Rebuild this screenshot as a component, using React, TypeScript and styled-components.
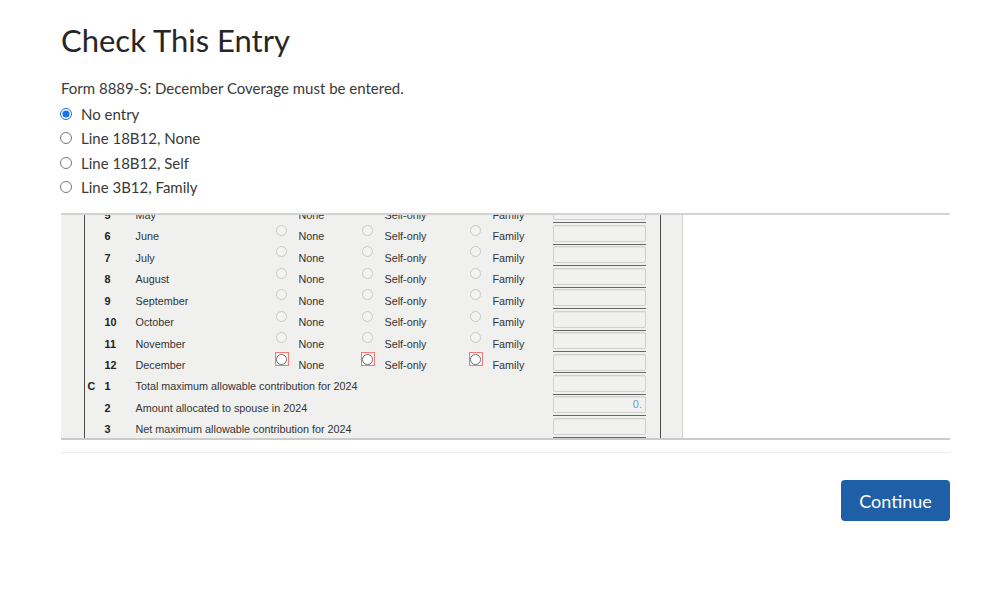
import { useLayoutEffect, useRef } from 'react';
import styled, { createGlobalStyle } from 'styled-components';

const GlobalStyle = createGlobalStyle`
  html, body {
    margin: 0;
    padding: 0;
    background: #ffffff;
  }
  body {
    font-family: Lato, "Noto Sans", sans-serif;
    color: #333333;
  }
`;

const Page = styled.main`
  padding: 20px 49px 0 61px;
`;

const Title = styled.h1`
  margin: 0;
  font-size: 31px;
  line-height: 40px;
  font-weight: 400;
  color: #262626;
`;

const Message = styled.p`
  margin: 16px 0 2px;
  font-size: 15px;
  line-height: 24px;
  color: #393939;
`;

const Choices = styled.div`
  display: flex;
  flex-direction: column;
`;

const Choice = styled.label`
  display: flex;
  align-items: center;
  gap: 9px;
  height: 24.3px;
  font-size: 15px;
  color: #393939;
`;

const ChoiceRadio = styled.input.attrs({ type: 'radio' })`
  width: 12px;
  height: 12px;
  margin: 0 0 0 -1px;
  accent-color: #1a73e8;
`;

const Viewer = styled.section`
  margin-top: 14px;
  border-top: 2px solid #d3d3d3;
  border-bottom: 2px solid #cbcbcb;
`;

const Viewport = styled.div`
  height: 223px;
  overflow: hidden;
  background: #ffffff;
`;

const Sheet = styled.div`
  width: 622px;
  box-sizing: border-box;
  padding-left: 22.5px;
  background: #f0f0ef;
  border-right: 1.5px solid #d2d2d2;
  font-family: "Liberation Sans", Arial, sans-serif;
  font-size: 10.8px;
  color: #333333;
`;

const FormBody = styled.div`
  width: 577px;
  box-sizing: border-box;
  padding: 40px 0 30px;
  border-left: 1.5px solid #4a4a4a;
  border-right: 1.5px solid #4a4a4a;
`;

const Row = styled.div`
  display: grid;
  grid-template-columns: 15px 36px 140px 86px 108px 84px 92px 13px;
  height: 21.45px;
  align-items: start;
`;

const Letter = styled.div`
  padding: 6px 0 0 3px;
  line-height: 14px;
  font-weight: 700;
  color: #222222;
`;

const LineNo = styled.div`
  padding: 6px 0 0 5px;
  line-height: 14px;
  font-weight: 700;
  color: #222222;
`;

const Desc = styled.div<{ $wide?: boolean }>`
  grid-column: ${(p) => (p.$wide ? 'span 4' : 'span 1')};
  padding-top: 6px;
  line-height: 14px;
  white-space: nowrap;
`;

const Option = styled.div`
  display: flex;
  align-items: flex-start;
`;

const OptionLabel = styled.span`
  margin-left: 10px;
  padding-top: 6px;
  line-height: 14px;
`;

const BubbleFrame = styled.span<{ $flag?: boolean }>`
  display: flex;
  align-items: center;
  justify-content: center;
  width: 14px;
  height: 14px;
  margin: 0 0 0 -1px;
  box-sizing: border-box;
  border: 1px solid ${(p) => (p.$flag ? '#f47a7a' : 'transparent')};
`;

const Bubble = styled.span<{ $flag?: boolean }>`
  display: block;
  width: 11px;
  height: 11px;
  box-sizing: border-box;
  border-radius: 50%;
  border: 1px solid ${(p) => (p.$flag ? '#707070' : '#c9c9c9')};
  background: ${(p) => (p.$flag ? '#ffffff' : '#f3f3f2')};
`;

const InputCell = styled.div`
  grid-column: 7;
  height: 21.45px;
  box-sizing: border-box;
  padding-top: 1.5px;
  margin: 0 -0.5px;
  border-bottom: 1.5px solid #666666;
`;

const InputBox = styled.div`
  height: 17px;
  box-sizing: border-box;
  border: 1px solid #d0d0d0;
  border-radius: 2px;
  background: #f1f1f0;
  box-shadow: inset 0 1px 1px rgba(0, 0, 0, 0.05);
  padding-right: 3px;
  text-align: right;
  line-height: 15px;
  font-size: 11px;
  color: #6f9cc9;
`;

const Separator = styled.hr`
  margin: 12px 0 0;
  border: 0;
  border-top: 1px solid #ececec;
`;

const Footer = styled.div`
  display: flex;
  justify-content: flex-end;
  margin-top: 27px;
`;

const ContinueButton = styled.button`
  width: 109px;
  height: 41px;
  border: 0;
  border-radius: 4px;
  background: #1f5fa7;
  color: #ffffff;
  font-family: Lato, "Noto Sans", sans-serif;
  font-size: 18px;
  cursor: pointer;
`;

const months = [
  'January', 'February', 'March', 'April', 'May', 'June',
  'July', 'August', 'September', 'October', 'November', 'December',
];

const totals = [
  { no: '1', text: 'Total maximum allowable contribution for 2024', value: '' },
  { no: '2', text: 'Amount allocated to spouse in 2024', value: '0.' },
  { no: '3', text: 'Net maximum allowable contribution for 2024', value: '' },
  { no: '4', text: 'Contributions made for 2024', value: '' },
  { no: '5', text: 'Employer contributions for 2024', value: '' },
];

const choices = ['No entry', 'Line 18B12, None', 'Line 18B12, Self', 'Line 3B12, Family'];

function CoverageOption({ label, flagged }: { label: string; flagged: boolean }) {
  return (
    <Option>
      <BubbleFrame $flag={flagged}>
        <Bubble $flag={flagged} />
      </BubbleFrame>
      <OptionLabel>{label}</OptionLabel>
    </Option>
  );
}

function CoverageRow({ index, name }: { index: number; name: string }) {
  const flagged = index === 11;
  return (
    <Row>
      <Letter>{index === 0 ? 'B' : ''}</Letter>
      <LineNo>{index + 1}</LineNo>
      <Desc>{name}</Desc>
      <CoverageOption label="None" flagged={flagged} />
      <CoverageOption label="Self-only" flagged={flagged} />
      <CoverageOption label="Family" flagged={flagged} />
      <InputCell>
        <InputBox />
      </InputCell>
    </Row>
  );
}

export default function App() {
  const viewportRef = useRef<HTMLDivElement>(null);

  useLayoutEffect(() => {
    if (viewportRef.current) viewportRef.current.scrollTop = 139;
  }, []);

  return (
    <>
      <GlobalStyle />
      <Page>
        <Title>Check This Entry</Title>
        <Message>Form 8889-S: December Coverage must be entered.</Message>
        <Choices>
          {choices.map((c, i) => (
            <Choice key={c}>
              <ChoiceRadio name="fix" defaultChecked={i === 0} />
              {c}
            </Choice>
          ))}
        </Choices>

        <Viewer>
          <Viewport ref={viewportRef}>
            <Sheet>
              <FormBody>
                {months.map((m, i) => (
                  <CoverageRow key={m} index={i} name={m} />
                ))}
                {totals.map((t, i) => (
                  <Row key={t.no}>
                    <Letter>{i === 0 ? 'C' : ''}</Letter>
                    <LineNo>{t.no}</LineNo>
                    <Desc $wide>{t.text}</Desc>
                    <InputCell>
                      <InputBox>{t.value}</InputBox>
                    </InputCell>
                  </Row>
                ))}
              </FormBody>
            </Sheet>
          </Viewport>
        </Viewer>

        <Separator />
        <Footer>
          <ContinueButton>Continue</ContinueButton>
        </Footer>
      </Page>
    </>
  );
}
